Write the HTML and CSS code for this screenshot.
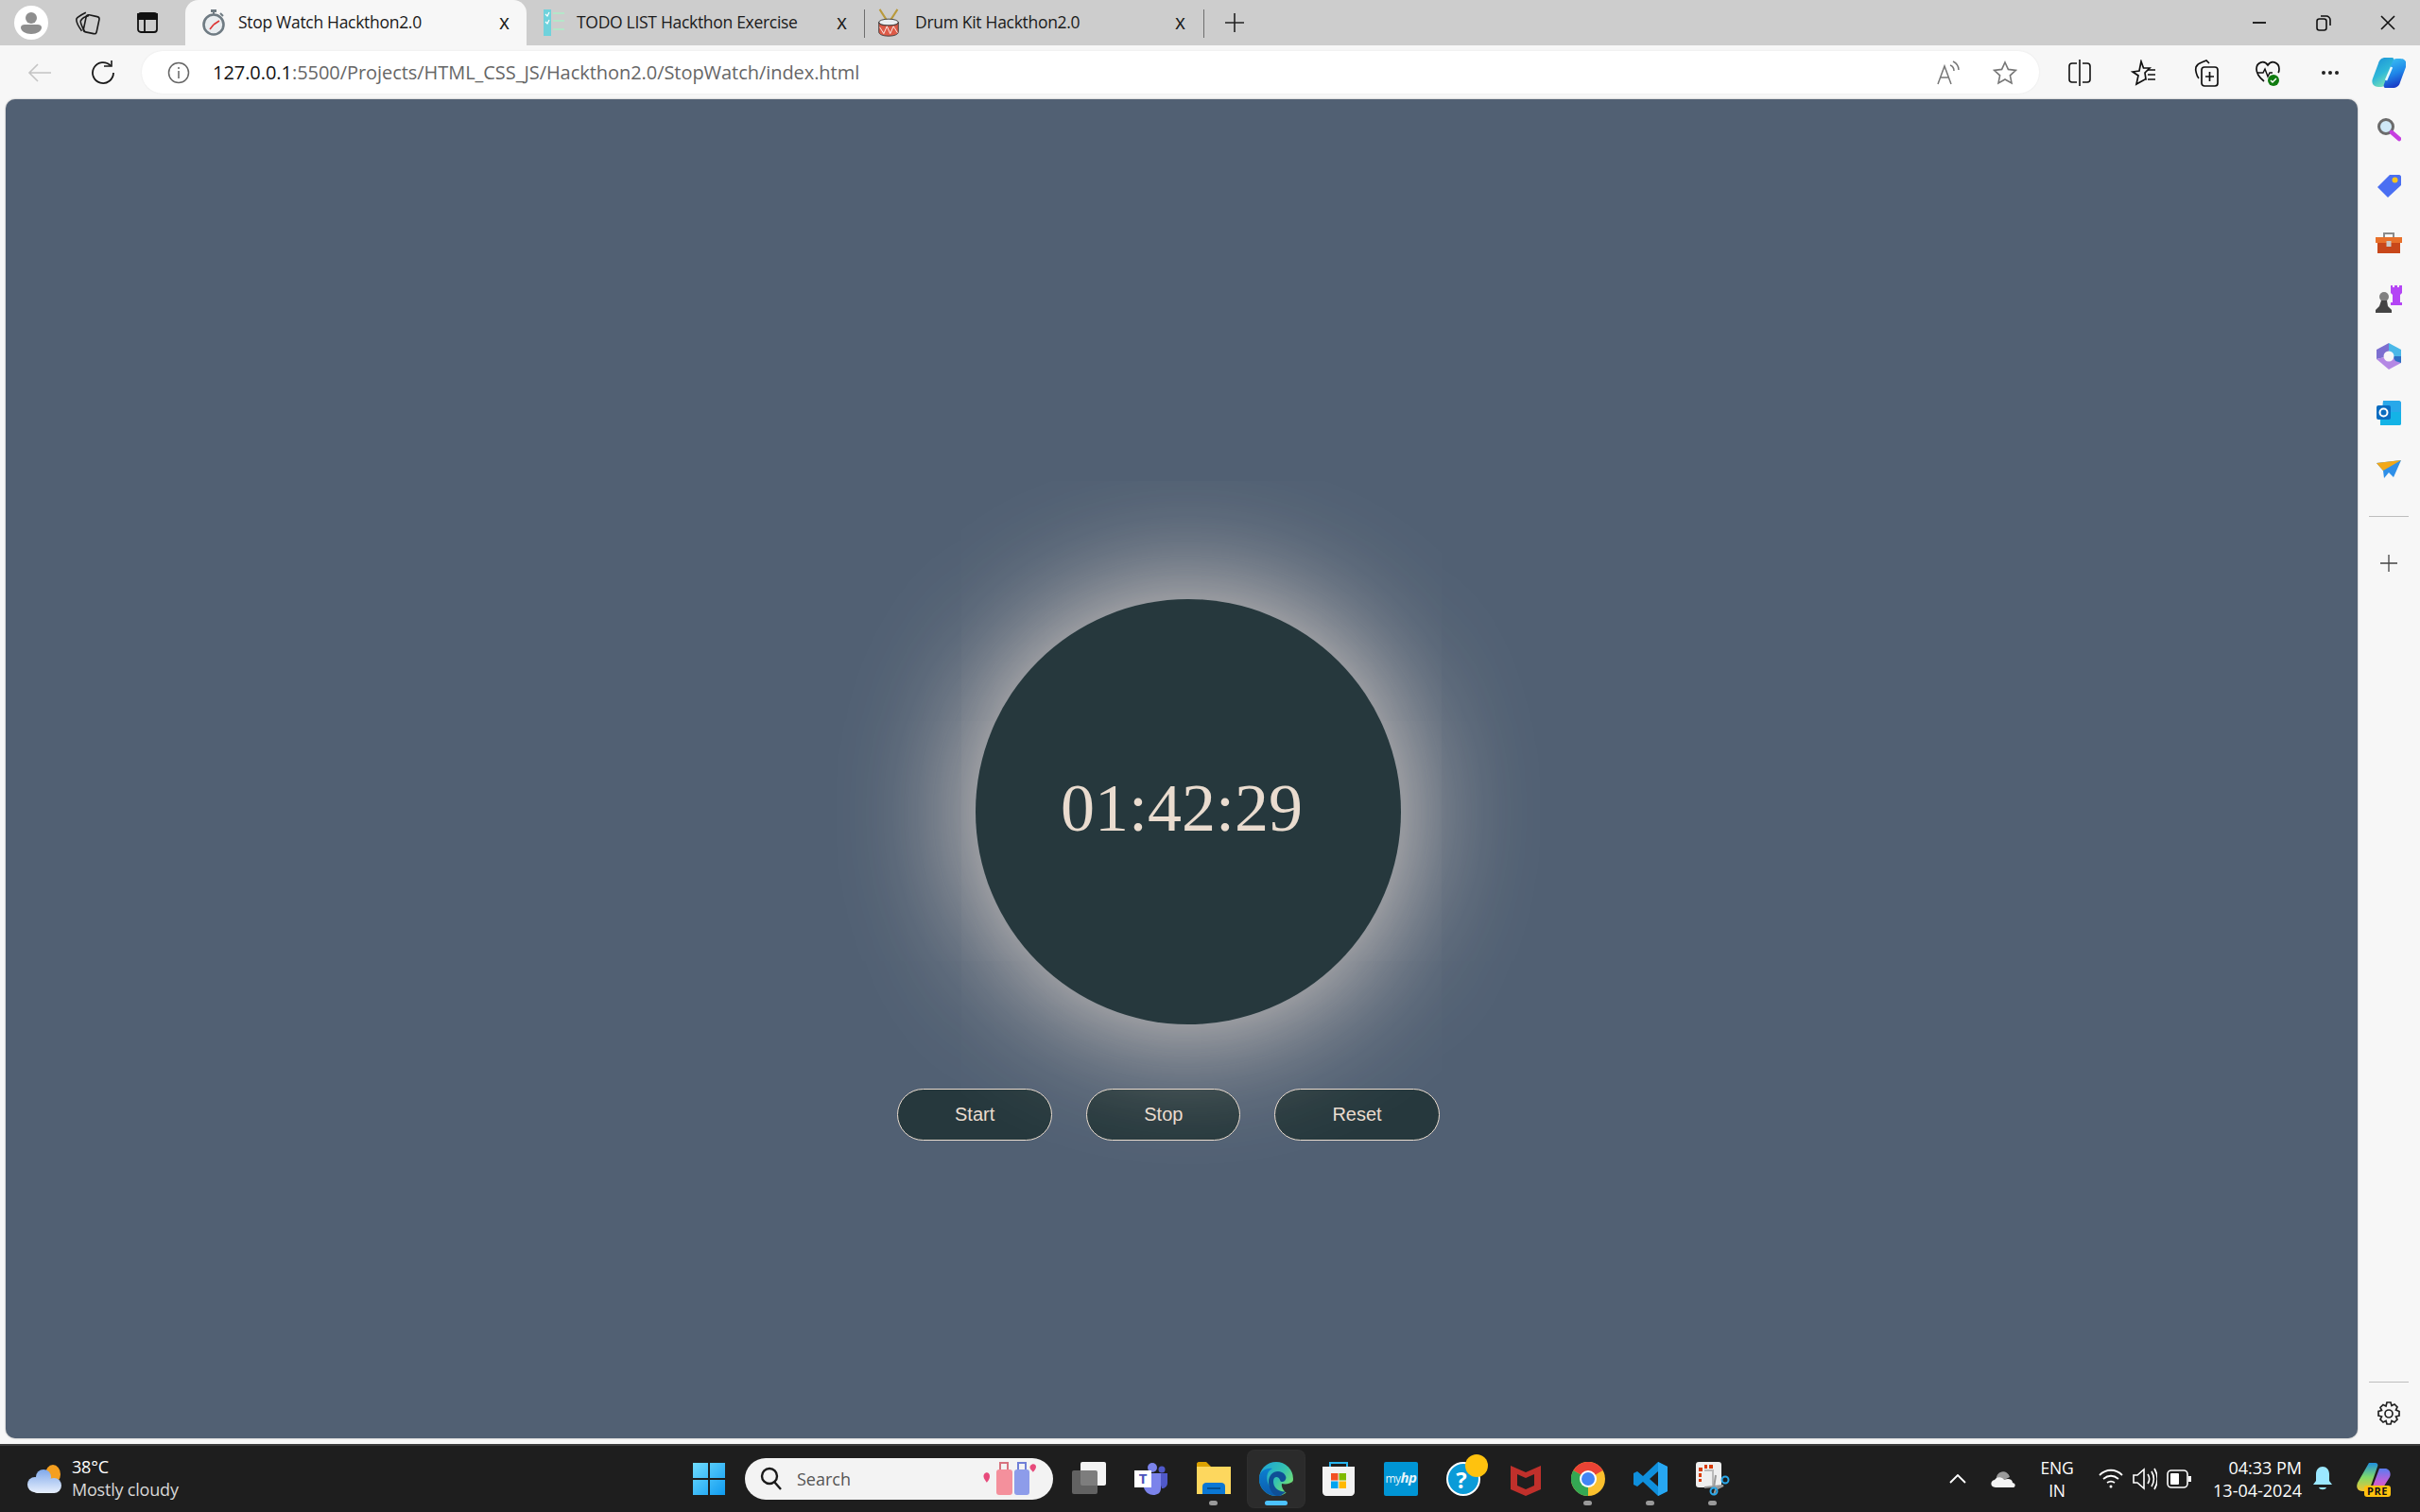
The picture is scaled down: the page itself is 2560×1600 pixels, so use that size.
FILE: index.html
```html
<!DOCTYPE html>
<html lang="en">

<head>
    <meta charset="UTF-8">
    <title>Stop Watch Hackthon2.0</title>
    <link rel="stylesheet" href="styles.css">
</head>

<body>
    <!-- tab strip -->
    <div class="tabstrip">
        <div class="avatar">
            <svg width="36" height="36" viewBox="0 0 36 36"><circle cx="18" cy="18" r="18" fill="#fff"/><circle cx="18" cy="13" r="6" fill="#8e8e8e"/><path d="M7 23c0-2 2-3 4-3h14c2 0 4 1 4 3 0 4-5 7-11 7S7 27 7 23z" fill="#8e8e8e"/></svg>
        </div>
        <div class="strip-btn strip-workspaces">
            <svg width="26" height="26" viewBox="0 0 24 24" fill="none" stroke="#1a1a1a" stroke-width="1.500"><path d="M6 20C3 16 0 11 1 8c1-2 5-4 9-6"/><path d="M9 21C7 17 4 12 5 10c1-2 4-4 8-5"/><rect x="9" y="5" width="13" height="17" rx="2.500" transform="rotate(12 15 13)"/></svg>
        </div>
        <div class="strip-btn strip-vertical">
            <svg width="24" height="24" viewBox="0 0 24 24" fill="none" stroke="#111" stroke-width="1.800"><rect x="2" y="2" width="20" height="20" rx="3"/><path d="M2 3h20v5H2z" fill="#111"/><path d="M9 8v14"/></svg>
        </div>
        <div class="tab tab-active">
            <svg class="tab-icon" width="24" height="28" viewBox="0 0 24 28"><rect x="9" y="0" width="6" height="3" fill="#6f7b83"/><rect x="11" y="2" width="2" height="4" fill="#6f7b83"/><path d="M19 4l3 3" stroke="#6f7b83" stroke-width="2"/><circle cx="12" cy="16" r="10.500" fill="#e9edf0" stroke="#6f7b83" stroke-width="2.600"/><path d="M12 16l6-4" stroke="#d33" stroke-width="1.600"/><path d="M12 16l-4 5" stroke="#d33" stroke-width="1.600"/></svg>
            <span class="tab-title">Stop Watch Hackthon2.0</span>
            <span class="tab-close">x</span>
        </div>
        <div class="tab tab-todo">
            <svg class="tab-icon" width="32" height="28" viewBox="0 0 32 28"><rect x="0" y="0" width="8" height="28" fill="#6fd2dc"/><path d="M2 5l2 2 2-4M2 13l2 2 2-4" stroke="#fff" stroke-width="1.200" fill="none"/><path d="M10 4h12M10 12h12M10 21h12" stroke="#b5e6c9" stroke-width="2"/></svg>
            <span class="tab-title">TODO LIST Hackthon Exercise</span>
            <span class="tab-close">x</span>
        </div>
        <div class="tab tab-drum">
            <svg class="tab-icon" width="24" height="32" viewBox="0 0 28 37"><path d="M3 2l9 14M25 2l-9 14" stroke="#b99a3c" stroke-width="2.400"/><ellipse cx="14" cy="18" rx="12" ry="4" fill="#e9edf0" stroke="#333"/><path d="M2 18v12c0 3 5 5 12 5s12-2 12-5V18c0 3-5 4-12 4S2 21 2 18z" fill="#dd5a47" stroke="#333"/><path d="M3 24l5 8 4-9 4 9 4-9 5 8" stroke="#fff" fill="none"/></svg>
            <span class="tab-title">Drum Kit Hackthon2.0</span>
            <span class="tab-close">x</span>
        </div>
        <div class="new-tab">
            <svg width="20" height="20" viewBox="0 0 20 20" stroke="#222" stroke-width="1.600"><path d="M10 0v20M0 10h20"/></svg>
        </div>
        <div class="window-btns">
            <svg width="16" height="16" viewBox="0 0 16 16" stroke="#111" stroke-width="1.800"><path d="M1 8h14"/></svg>
            <svg width="16" height="18" viewBox="0 0 16 18" fill="none" stroke="#111" stroke-width="1.600"><rect x="1" y="5" width="10" height="12" rx="2.500"/><path d="M5 2h6c2 0 4 2 4 4v6"/></svg>
            <svg width="16" height="16" viewBox="0 0 16 16" stroke="#111" stroke-width="1.600"><path d="M1 1l14 14M15 1L1 15"/></svg>
        </div>
    </div>

    <!-- address bar row -->
    <div class="toolbar">
        <div class="nav-btn">
            <svg width="26" height="22" viewBox="0 0 26 22" fill="none" stroke="#c4c4c4" stroke-width="1.600"><path d="M25 11H2M11 2l-9 9 9 9"/></svg>
        </div>
        <div class="nav-btn">
            <svg width="26" height="26" viewBox="0 0 26 26" fill="none" stroke="#1a1a1a" stroke-width="1.800"><path d="M21 5.500A11 11 0 1 0 24 13"/><path d="M14 6h8V0" stroke-width="1.600"/></svg>
        </div>
        <div class="address">
            <svg class="info-icon" width="24" height="24" viewBox="0 0 24 24" fill="none" stroke="#666" stroke-width="1.500"><circle cx="12" cy="12" r="10.500"/><path d="M12 10v8M12 6v2"/></svg>
            <span class="url"><span class="url-host">127.0.0.1</span>:5500/Projects/HTML_CSS_JS/Hackthon2.0/StopWatch/index.html</span>
            <svg class="read-icon" width="26" height="26" viewBox="0 0 26 26" fill="none" stroke="#777" stroke-width="1.500"><path d="M1 25L8 6l7 19M3.500 18h9"/><path d="M14 5c3 1 4 3 4 6M17 1c4 2 6 5 6 9"/></svg>
            <svg class="star-icon" width="26" height="26" viewBox="0 0 26 26" fill="none" stroke="#777" stroke-width="1.600"><path d="M13 2l3.400 7.400 8 1-6 5.500 1.600 8L13 20l-7 3.900 1.600-8-6-5.500 8-1z"/></svg>
        </div>
        <div class="tool-btns">
            <svg width="24" height="28" viewBox="0 0 24 28" fill="none" stroke="#111" stroke-width="1.600"><path d="M12 0v28"/><path d="M9 4H4C2 4 1 5 1 7v14c0 2 1 3 3 3h5M15 4h5c2 0 3 1 3 3v14c0 2-1 3-3 3h-5"/></svg>
            <svg width="26" height="28" viewBox="0 0 26 28" fill="none" stroke="#111" stroke-width="1.700"><path d="M11 2l2.500 7H20l-5 5 1 7-1 0-9 5 2-9-6-4 7-1z"/><path d="M18 11h8M18 16h8M18 21h8"/></svg>
            <svg width="26" height="30" viewBox="0 0 26 30" fill="none" stroke="#111" stroke-width="1.700"><path d="M5 21c-2-2-4-9-3-12 1-2 3-4 6-5l5-2 3 3"/><rect x="8" y="9" width="17" height="20" rx="3"/><path d="M16.500 14v10M12 19h9"/></svg>
            <svg width="26" height="30" viewBox="0 0 26 30"><path d="M9 24C4 20 1 16 1 11c0-7 8-10 12-4 4-6 12-3 12 4 0 1 0 3-1 4" fill="none" stroke="#111" stroke-width="1.700"/><path d="M2 15h6l2-4 3 8 2-4h3" fill="none" stroke="#111" stroke-width="1.500"/><circle cx="19" cy="23" r="6" fill="#107c10"/><path d="M16 23l2 2 4-4" fill="none" stroke="#fff" stroke-width="1.500"/></svg>
            <svg width="20" height="6" viewBox="0 0 20 6" fill="#222"><circle cx="3" cy="3" r="2"/><circle cx="10" cy="3" r="2"/><circle cx="17" cy="3" r="2"/></svg>
            <svg width="36" height="32" viewBox="0 0 36 32"><defs><linearGradient id="cpa" x1="0" y1="0" x2="0.500" y2="1"><stop offset="0" stop-color="#1b8fd8"/><stop offset="0.600" stop-color="#2fb8d8"/><stop offset="1" stop-color="#78e0b8"/></linearGradient><linearGradient id="cpb" x1="0" y1="0" x2="0.300" y2="1"><stop offset="0" stop-color="#3fc8f5"/><stop offset="0.600" stop-color="#1f86e8"/><stop offset="1" stop-color="#1a3fc8"/></linearGradient></defs><path d="M14 0h7c2 0 3 1 2 4l-9 24c-1 2-2 3-4 3H7C2 31-1 27 1 22L7 6c1-4 4-6 7-6z" fill="url(#cpa)"/><path d="M22 32h-7c-2 0-3-1-2-4l9-24c1-2 2-3 4-3h4c5 0 8 4 6 9l-6 16c-1 4-4 6-8 6z" fill="url(#cpb)"/><path d="M21 10l-6 14" stroke="#e8fbff" stroke-width="2.500"/></svg>
        </div>
    </div>

    <div class="main">
        <!-- the actual stopwatch page -->
        <main class="page">
            <div class="watch">
                <h1 class="time">01:42:29</h1>
            </div>
            <div class="controls">
                <button class="btn">Start</button>
                <button class="btn">Stop</button>
                <button class="btn">Reset</button>
            </div>
        </main>

        <aside class="sidebar">
            <div class="side-item">
                <svg width="26" height="26" viewBox="0 0 26 26"><circle cx="10" cy="10" r="7.500" fill="#cfe8f7" stroke="#6b6b6b" stroke-width="3"/><path d="M16 16l8 7" stroke="#c63fe0" stroke-width="4.500" stroke-linecap="round"/></svg>
            </div>
            <div class="side-item">
                <svg width="26" height="26" viewBox="0 0 26 26"><path d="M14 1h10c1 0 2 1 2 2v9L12 25 1 14z" fill="#4a6ff2"/><circle cx="19.500" cy="6.500" r="3" fill="#f7c51e"/></svg>
            </div>
            <div class="side-item">
                <svg width="28" height="24" viewBox="0 0 28 24"><path d="M9 6V2h10v4" fill="none" stroke="#8b8b8b" stroke-width="2"/><path d="M0 6h28v6H0z" fill="#e8702a"/><path d="M2 12h24v11H2z" fill="#c8471a"/><rect x="11.500" y="10" width="5" height="6" fill="#c9c9c9"/></svg>
            </div>
            <div class="side-item">
                <svg width="28" height="30" viewBox="0 0 28 30"><path d="M16 1h2v2h2V1h3v2h2V1h3v8l-2 2v8h2v3H16v-3h2v-8l-2-2z" fill="#b445f5" transform="translate(0 -1)"/><circle cx="9" cy="12" r="5" fill="#808080"/><path d="M6 16h6l1 6 4 4v3H0v-3l4-4z" fill="#444"/></svg>
            </div>
            <div class="side-item">
                <svg width="26" height="28" viewBox="0 0 26 28"><path d="M13 0l13 7v7H13z" fill="#4ab8e8"/><path d="M13 0L0 7v10l13-3z" fill="#7c6fd0"/><path d="M0 17l13 11 13-7v-7H13z" fill="#b488e4"/><path d="M26 14v7l-6-2-3-5z" fill="#2e6fc4"/><circle cx="13" cy="14" r="5.500" fill="#f7f7f7"/></svg>
            </div>
            <div class="side-item">
                <svg width="26" height="26" viewBox="0 0 26 26"><path d="M7 0h17c1 0 2 1 2 2v22c0 1-1 2-2 2H5v-8z" fill="#28a8ea"/><path d="M4 12l22 0v12c0 1-1 2-2 2H4z" fill="#14b3e6"/><rect x="0" y="5" width="15" height="15" rx="2" fill="#0a6cc0"/><circle cx="7.500" cy="12.500" r="4" fill="none" stroke="#fff" stroke-width="2"/></svg>
            </div>
            <div class="side-item">
                <svg width="26" height="20" viewBox="0 0 26 20"><path d="M0 3l26-3-8 18-5-5-5 6-1-8z" fill="#2e8fe8"/><path d="M0 3l26-3L7 11z" fill="#f2a818"/></svg>
            </div>
            <div class="side-rule side-rule-top"></div>
            <div class="side-item">
                <svg width="18" height="18" viewBox="0 0 18 18" stroke="#444" stroke-width="1.300"><path d="M9 0v18M0 9h18"/></svg>
            </div>
            <div class="side-rule side-rule-bottom"></div>
            <div class="side-gear">
                <svg width="26" height="26" viewBox="0 0 26 26" fill="none" stroke="#222" stroke-width="1.700"><circle cx="13" cy="13" r="4"/><path d="M11 1h4l1 3.500 3-1.500 3 3-1.500 3L24 10.500v4.500l-3.500 1 1.500 3-3 3-3-1.500-1 3.500h-4l-1-3.500-3 1.500-3-3 1.500-3L2 15v-4.500l3.500-1L4 6.500l3-3 3 1.500z"/></svg>
            </div>
        </aside>
    </div>

    <!-- windows taskbar -->
    <footer class="taskbar">
        <div class="weather">
            <svg width="36" height="30" viewBox="0 0 36 30"><defs><linearGradient id="cloud" gradientUnits="userSpaceOnUse" x1="0" y1="5" x2="0" y2="30"><stop offset="0" stop-color="#7fa8ea"/><stop offset="1" stop-color="#e8f0fd"/></linearGradient></defs><ellipse cx="27" cy="10" rx="8" ry="10" fill="#f59f1f"/><circle cx="17" cy="13" r="8" fill="url(#cloud)"/><circle cx="8" cy="21" r="8" fill="url(#cloud)"/><circle cx="28" cy="22" r="8" fill="url(#cloud)"/><rect x="5" y="18" width="26" height="12" rx="5" fill="url(#cloud)"/></svg>
            <div class="weather-text">
                <div class="weather-temp">38°C</div>
                <div class="weather-desc">Mostly cloudy</div>
            </div>
        </div>
        <div class="task-cell">
            <svg width="36" height="36" viewBox="0 0 36 36"><defs><linearGradient id="win" x1="0" y1="0" x2="1" y2="1"><stop offset="0" stop-color="#6fdcff"/><stop offset="1" stop-color="#0f9bf0"/></linearGradient></defs><path d="M1 1h16v16H1zM19 1h16v16H19zM1 19h16v16H1zM19 19h16v16H19z" fill="url(#win)"/></svg>
        </div>
        <div class="search-cell">
            <div class="search">
                <svg class="search-icon" width="24" height="26" viewBox="0 0 24 26" fill="none" stroke="#1a1a1a" stroke-width="2.400"><circle cx="10" cy="10" r="8"/><path d="M15 16l7 8"/></svg>
                <span class="search-text">Search</span>
                <svg class="search-art" width="58" height="36" viewBox="0 0 58 36"><path d="M1 13c2-3 6-2 6 2s-3 6-3 7c-1-2-5-5-3-9z" fill="#e74a7b"/><rect x="14" y="8" width="17" height="27" rx="3" fill="#f4909c"/><path d="M18 8V1h8v7" fill="none" stroke="#d7737f" stroke-width="2"/><rect x="33" y="8" width="16" height="27" rx="3" fill="#8d9cea"/><path d="M37 8V1h8v7" fill="none" stroke="#6f7fd7" stroke-width="2"/><path d="M50 4c2-3 6-2 6 1s-3 5-3 6c-1-2-5-4-3-7z" fill="#e74a7b"/></svg>
            </div>
        </div>
        <div class="task-cell">
            <svg width="36" height="36" viewBox="0 0 36 36"><rect x="9" y="0" width="27" height="25" rx="2" fill="#f4f4f4"/><rect x="0" y="9" width="27" height="25" rx="2" fill="#6c6c6c" fill-opacity=".88"/></svg>
        </div>
        <div class="task-cell">
            <svg width="36" height="36" viewBox="0 0 36 36"><circle cx="19" cy="6" r="5" fill="#7b83eb"/><circle cx="29" cy="8" r="3.500" fill="#5059c9"/><path d="M24 12h11v10c0 4-3 6-6 6z" fill="#5059c9"/><path d="M10 12h18v16c0 5-4 7-8 7s-9-3-10-8z" fill="#7b83eb"/><rect x="0" y="9" width="18" height="18" fill="#fff"/><text class="teams-t" x="9" y="23" text-anchor="middle">T</text></svg>
        </div>
        <div class="task-cell">
            <svg width="36" height="36" viewBox="0 0 36 36"><path d="M0 2c0-1 1-2 2-2h8l5 5h-6L0 5z" fill="#dba100"/><path d="M0 5h36v29H0z" fill="#fdd75e"/><path d="M6 34V26c0-3 2-4 4-4h16c2 0 4 1 4 4v8z" fill="#0a77d4"/><rect x="11" y="27" width="14" height="2" fill="#034f92"/></svg>
        </div>
        <div class="task-cell task-cell-active">
            <svg width="36" height="36" viewBox="0 0 36 36"><defs><linearGradient id="edgeA" x1="0" y1="0" x2="1" y2="0.700"><stop offset="0" stop-color="#1aa0dc"/><stop offset="0.600" stop-color="#35c2b0"/><stop offset="1" stop-color="#7de36a"/></linearGradient><linearGradient id="edgeB" x1="0" y1="0" x2="0" y2="1"><stop offset="0" stop-color="#0c7fd0"/><stop offset="1" stop-color="#0b5cad"/></linearGradient></defs><circle cx="18" cy="18" r="18" fill="url(#edgeA)"/><path d="M0 18C0 9 8 6 14 7c-7 3-7 12-3 19 3 5 8 9 14 9-3 1-5 1-7 1C8 36 0 28 0 18z" fill="url(#edgeB)"/><path d="M10 21c0-8 7-13 14-10 4 2 6 6 3 9-2 2-5 1-5-1-1-3-4-4-6-2-2 3-1 9 3 12 3 2 7 3 10 2-3 3-7 5-10 5-5-1-9-8-9-15z" fill="#0f4f96"/><path d="M24 23c4 1 10 0 12-3 0 5-2 10-7 13-3-2-6-7-5-10z" fill="#2b2b2b"/></svg>
            <span class="task-active"></span>
        </div>
        <div class="task-cell">
            <svg width="36" height="36" viewBox="0 0 36 36"><path d="M9 6V1h18v5" fill="none" stroke="#29b6f0" stroke-width="2"/><path d="M1 5h34v27c0 2-2 4-4 4H5c-2 0-4-2-4-4z" fill="#f2f2f2"/><rect x="10" y="12" width="7.500" height="7.500" fill="#f25022"/><rect x="18.500" y="12" width="7.500" height="7.500" fill="#7fba00"/><rect x="10" y="20.500" width="7.500" height="7.500" fill="#00a4ef"/><rect x="18.500" y="20.500" width="7.500" height="7.500" fill="#ffb900"/></svg>
        </div>
        <div class="task-cell">
            <div class="myhp">my<i>hp</i></div>
        </div>
        <div class="task-cell">
            <svg width="36" height="36" viewBox="0 0 36 36"><circle cx="18" cy="18" r="17" fill="#0a9bd8" stroke="#fff" stroke-width="2"/><text class="help-q" x="16" y="28" text-anchor="middle">?</text></svg>
            <span class="help-badge"></span>
        </div>
        <div class="task-cell">
            <svg width="32" height="36" viewBox="0 0 32 36"><path d="M0 4l16 7 16-7v25l-16 7-16-7zM7 13v12l9 4 9-4V13l-9 4z" fill="#c0302b" fill-rule="evenodd"/></svg>
        </div>
        <div class="task-cell">
            <svg width="36" height="36" viewBox="0 0 36 36"><circle cx="18" cy="18" r="18" fill="#fbc02d"/><path d="M18 18L2.400 9A18 18 0 0 1 33.600 9z" fill="#ea4335"/><path d="M18 18L2.400 9A18 18 0 0 0 18 36z" fill="#34a853"/><circle cx="18" cy="18" r="9" fill="#fff"/><circle cx="18" cy="18" r="7" fill="#4285f4"/></svg>
        </div>
        <div class="task-cell">
            <svg width="36" height="36" viewBox="0 0 36 36"><path d="M26 0l10 5v26l-10 5L10 21l-6 5-4-2V12l4-2 6 5zM26 10l-9 8 9 8z" fill="#0f8fdc" fill-rule="evenodd"/><path d="M26 0l10 5v26l-10 5z" fill="#27a7f2"/></svg>
        </div>
        <div class="task-cell">
            <svg width="36" height="36" viewBox="0 0 36 36"><rect x="0" y="0" width="27" height="27" rx="3" fill="#efefef"/><path d="M3 6h4v4H3zM9 3h3v4H9zM14 3h4v4h-4zM3 12h3v4H3zM3 18h3v3H3z" fill="#d83b01"/><path d="M9 9h9v18" fill="none" stroke="#bbb" stroke-width="2"/><path d="M9 27l20-2-8 4-2 6M21 14l-2 13" fill="none" stroke="#999" stroke-width="2"/><circle cx="31" cy="19" r="3.500" fill="none" stroke="#29a8ea" stroke-width="2"/><circle cx="19" cy="31" r="3.500" fill="none" stroke="#29a8ea" stroke-width="2"/></svg>
        </div>
        <div class="tray">
            <svg class="tray-chevron" width="18" height="10" viewBox="0 0 18 10" fill="none" stroke="#fff" stroke-width="1.800"><path d="M1 9l8-8 8 8"/></svg>
            <svg class="tray-cloud" width="26" height="18" viewBox="0 0 26 18"><path d="M6 10a7 7 0 0 1 14-3l-6 3z" fill="#9a9a9a"/><path d="M5 18c-6 0-6-7-1-8 3-4 8-3 10 0 4-2 9-1 9 3 4 1 3 5 0 5z" fill="#f4f4f4"/></svg>
            <div class="tray-lang">ENG<br>IN</div>
            <svg class="tray-wifi" width="26" height="22" viewBox="0 0 26 22" fill="none" stroke="#fff" stroke-width="1.800"><path d="M1 7c7-7 17-7 24 0M5 11c5-4 11-4 16 0M9 15c3-2 5-2 8 0"/><circle cx="13" cy="19" r="1.500" fill="#fff" stroke="none"/></svg>
            <svg class="tray-sound" width="26" height="24" viewBox="0 0 26 24" fill="none" stroke="#fff" stroke-width="1.600"><path d="M1 8h4l7-6v20l-7-6H1z"/><path d="M16 7c2 3 2 7 0 10M20 4c3 5 3 11 0 16M23 1c4 7 4 15 0 22"/></svg>
            <svg class="tray-battery" width="26" height="20" viewBox="0 0 26 20"><rect x="1" y="1" width="21" height="18" rx="4" fill="none" stroke="#fff" stroke-width="1.600"/><rect x="4" y="4" width="9" height="12" rx="1" fill="#fff"/><rect x="23" y="7" width="3" height="6" fill="#fff"/></svg>
            <div class="tray-clock">04:33 PM<br>13-04-2024</div>
            <svg class="tray-bell" width="20" height="26" viewBox="0 0 20 26" fill="#9be8ff"><path d="M10 0c4 0 7 3 7 8v7l3 4H0l3-4V8c0-5 3-8 7-8z"/><path d="M6 22h8c-1 3-7 3-8 0z"/></svg>
            <div class="tray-copilot">
                <svg width="36" height="34" viewBox="0 0 36 34"><defs><linearGradient id="preA" x1="0" y1="0" x2="0" y2="1"><stop offset="0" stop-color="#1e90e0"/><stop offset="0.500" stop-color="#7fd86a"/><stop offset="1" stop-color="#f4c430"/></linearGradient><linearGradient id="preB" x1="0" y1="0" x2="0" y2="1"><stop offset="0" stop-color="#5a7cf0"/><stop offset="0.500" stop-color="#c45fd8"/><stop offset="1" stop-color="#f0608c"/></linearGradient></defs><path d="M13 0h7c2 0 3 2 2 4l-9 26H6c-5 0-7-4-5-9z" fill="url(#preA)"/><path d="M23 34h-6c-2 0-3-2-2-4l9-24h6c4 0 7 4 5 9z" fill="url(#preB)"/></svg>
                <span class="pre-badge">PRE</span>
            </div>
        </div>
    </footer>
</body>

</html>
```

FILE: styles.css
```css
* {
    box-sizing: border-box;
}

body {
    margin: 0;
    height: 100vh;
    overflow: hidden;
    display: flex;
    flex-direction: column;
    background-color: #f7f7f7;
    font-family: "Open Sans", sans-serif;
}

svg {
    display: block;
    flex: none;
}

/* tab strip */
.tabstrip {
    display: flex;
    align-items: center;
    height: 48px;
    background-color: #cdcdcd;
    font-size: 17.5px;
    letter-spacing: -0.3px;
    color: #1a1a1a;
}

.avatar {
    margin-left: 15px;
}

.strip-workspaces {
    margin-left: 29px;
}

.strip-vertical {
    margin-left: 38px;
}

.tab {
    display: flex;
    align-items: center;
    height: 48px;
}

.tab-title {
    white-space: nowrap;
    margin-top: -2px;
}

.tab-active {
    width: 361px;
    margin-left: 28px;
    padding-left: 18px;
    background-color: #f7f7f7;
    border-radius: 14px 14px 0 0;
}

.tab-active .tab-title {
    margin-left: 14px;
    width: 276px;
}

.tab-todo {
    width: 357px;
    padding-left: 18px;
}

.tab-todo .tab-title {
    margin-left: 3px;
    width: 275px;
}

.tab-drum {
    width: 359px;
    padding-left: 14px;
}

.tab-drum .tab-title {
    margin-left: 16px;
    width: 275px;
}

.tab-close {
    font-size: 21px;
    line-height: 1;
    margin-top: -2px;
}

.tab-todo,
.tab-drum {
    position: relative;
}

.tab-todo::after,
.tab-drum::after {
    content: "";
    position: absolute;
    right: -1px;
    top: 10px;
    width: 1px;
    height: 30px;
    background-color: #6e6e6e;
}

.new-tab {
    margin-left: 23px;
}

.window-btns {
    display: flex;
    align-items: center;
    gap: 52px;
    margin-left: auto;
    margin-right: 26px;
}

/* address bar row */
.toolbar {
    display: flex;
    align-items: center;
    height: 57px;
    padding-left: 8px;
    background-color: #f7f7f7;
}

.nav-btn {
    display: flex;
    justify-content: center;
    width: 67px;
}

.address {
    display: flex;
    align-items: center;
    width: 2007px;
    height: 45px;
    margin-left: 8px;
    padding-left: 27px;
    background-color: #fff;
    border-radius: 22px;
    box-shadow: 0 0 2px #e4e4e4;
}

.url {
    margin-left: 24px;
    font-size: 20px;
    letter-spacing: -0.05px;
    color: #666;
}

.url-host {
    color: #111;
}

.read-icon {
    margin-left: auto;
}

.star-icon {
    margin-left: 33px;
    margin-right: 23px;
}

.tool-btns {
    display: grid;
    grid-template-columns: 66px 68px 65px 66px 66px 58px;
    justify-items: center;
    align-items: center;
    margin-left: 10px;
}

/* page + sidebar */
.main {
    display: flex;
    flex: 1;
    min-height: 0;
}

.page {
    width: 2488px;
    margin-left: 6px;
    margin-bottom: 6px;
    padding-top: 529px;
    padding-left: 943px;
    background-color: #516073;
    border-radius: 10px;
    box-shadow: 0 0 2px #9a9a9a;
}

.watch {
    position: relative;
    z-index: 1;
    display: flex;
    align-items: center;
    justify-content: center;
    width: 450px;
    height: 450px;
    margin-left: 83px;
    padding-right: 14px;
    padding-bottom: 8px;
    background-color: #26383d;
    border-radius: 50%;
    box-shadow: 0 0 140px #f2e4d8;
}

.time {
    margin: 0;
    font-family: "Liberation Serif", serif;
    font-size: 72px;
    font-weight: 400;
    color: #eadccf;
}

.controls {
    display: flex;
    gap: 36px;
    margin-top: 68px;
}

.btn {
    height: 55px;
    padding: 0 60px;
    font-family: "Liberation Sans", sans-serif;
    font-size: 20px;
    color: #eadccf;
    background-color: #26383d;
    border: 1px solid #eadccf;
    border-radius: 28px;
}

.sidebar {
    display: flex;
    flex-direction: column;
    align-items: center;
    width: 66px;
    padding-top: 2px;
}

.side-item {
    display: flex;
    align-items: center;
    justify-content: center;
    height: 60px;
}

.side-rule {
    width: 42px;
    height: 1px;
    background-color: #bdbdbd;
}

.side-rule-top {
    margin-top: 19px;
    margin-bottom: 19px;
}

.side-rule-bottom {
    margin-top: auto;
}

.side-gear {
    height: 65px;
    padding-top: 20px;
}

/* windows taskbar */
.taskbar {
    display: grid;
    grid-template-columns: 717px 66px 336px repeat(11, 66px) 1fr;
    align-items: center;
    height: 72px;
    background-color: #1e1e1e;
    border-top: 2px solid #3c3c3c;
    color: #fff;
}

.weather {
    display: flex;
    align-items: center;
    padding-left: 29px;
}

.weather-text {
    margin-top: -2px;
    margin-left: 11px;
    font-size: 18px;
    letter-spacing: -0.2px;
    line-height: 24px;
}

.weather-desc {
    color: #d8d8d8;
}

.task-cell {
    position: relative;
    display: flex;
    align-items: center;
    justify-content: center;
    height: 70px;
}

.task-cell-active {
    background-color: #2b2b2b;
    border-radius: 7px;
    height: 60px;
    margin: 0 3px;
    box-shadow: 0 0 0 1px #2f2f2f;
}

.task-active {
    position: absolute;
    left: 18px;
    bottom: 2px;
    width: 24px;
    height: 5px;
    border-radius: 3px;
    background-color: #4cc2ff;
}

.task-cell:nth-child(6)::after,
.task-cell:nth-child(12)::after,
.task-cell:nth-child(13)::after,
.task-cell:nth-child(14)::after {
    content: "";
    position: absolute;
    left: 28px;
    bottom: 7px;
    width: 9px;
    height: 5px;
    border-radius: 3px;
    background-color: #9a9a9a;
}

.search-cell {
    padding-left: 5px;
    padding-right: 5px;
}

.search {
    display: flex;
    align-items: center;
    height: 44px;
    padding: 0 16px 0 16px;
    background-color: #f3f3f3;
    border-radius: 22px;
}

.search-text {
    margin-left: 15px;
    font-size: 18px;
    color: #555;
}

.search-art {
    margin-left: auto;
}

.teams-t {
    font-family: "Open Sans", sans-serif;
    font-size: 15px;
    font-weight: 700;
    fill: #4b53bc;
}

.myhp {
    width: 36px;
    height: 36px;
    padding-top: 9px;
    font-size: 12px;
    letter-spacing: -0.5px;
    line-height: 1;
    text-align: center;
    color: #e6f5fb;
    background-color: #0095d5;
    border-radius: 2px;
}

.myhp i {
    font-weight: 700;
    font-size: 15px;
}

.help-q {
    font-family: "Open Sans", sans-serif;
    font-size: 24px;
    font-weight: 700;
    fill: #fff;
}

.help-badge {
    position: absolute;
    left: 35px;
    top: 9px;
    width: 24px;
    height: 24px;
    border-radius: 50%;
    background-color: #ffc20e;
}

.tray {
    display: flex;
    align-items: center;
    font-size: 17.5px;
    letter-spacing: -0.2px;
    line-height: 24px;
}

.tray-chevron {
    margin-left: 217px;
}

.tray-cloud {
    margin-left: 26px;
}

.tray-lang {
    width: 50px;
    margin-left: 19px;
    text-align: center;
}

.tray-wifi {
    margin-left: 19px;
}

.tray-sound {
    margin-left: 10px;
}

.tray-battery {
    margin-left: 10px;
}

.tray-clock {
    width: 116px;
    margin-left: 1px;
    font-size: 18px;
    letter-spacing: 0;
    text-align: right;
}

.tray-bell {
    margin-left: 12px;
}

.tray-copilot {
    position: relative;
    margin-left: 26px;
}

.pre-badge {
    position: absolute;
    left: 8px;
    top: 24px;
    padding: 0 3px;
    font-size: 11px;
    font-weight: 700;
    line-height: 12px;
    letter-spacing: 0.5px;
    color: #111;
    background-color: #ffc20e;
    border-radius: 3px;
}
```
